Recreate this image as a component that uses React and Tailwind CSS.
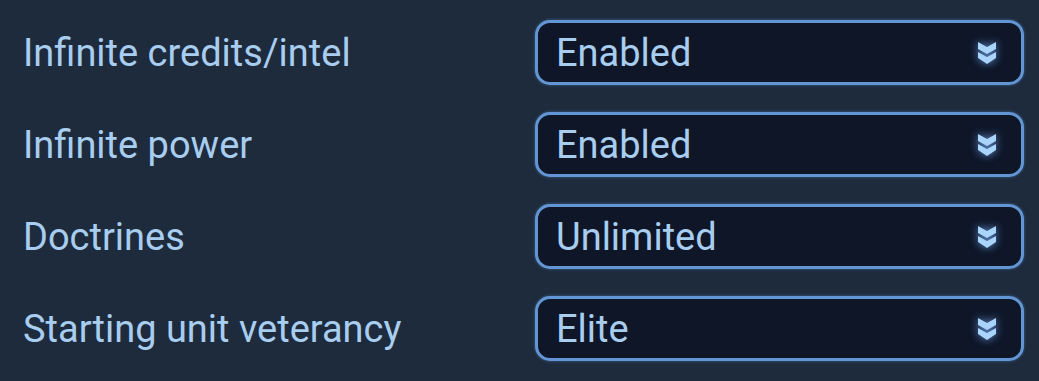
const rows = [
  { label: 'Infinite credits/intel', value: 'Enabled' },
  { label: 'Infinite power', value: 'Enabled' },
  { label: 'Doctrines', value: 'Unlimited' },
  { label: 'Starting unit veterancy', value: 'Elite' },
]

function Chevrons() {
  return (
    <svg
      className="w-[20px] h-[24px] drop-shadow-[0_0_4px_rgba(120,180,255,0.8)]"
      viewBox="0 0 20 24"
      fill="#a9d4fb"
    >
      <polygon points="1,1 10,6 19,1 19,8 10,13 1,8" />
      <polygon points="1,11 10,16 19,11 19,17 10,23 1,17" />
    </svg>
  )
}

export default function App() {
  return (
    <div
      className="w-[1039px] h-[381px] bg-[#1e2b3d] flex flex-col gap-[27px] py-[20px] pl-[23px] pr-[15px]"
      style={{ fontFamily: 'Roboto, "Noto Sans", sans-serif' }}
    >
      {rows.map((r) => (
        <div key={r.label} className="flex items-center h-[65px]">
          <div className="w-[512px] text-[38px] text-[#a8cdef] leading-none">{r.label}</div>
          <button className="flex-1 h-full flex items-center justify-between rounded-[15px] border-[3px] border-[#6195d4] bg-[#0e1628] pl-[18px] pr-[24px] text-[38px] text-[#a8cdef] leading-none shadow-[0_0_3px_rgba(100,160,230,0.5)]">
            <span>{r.value}</span>
            <Chevrons />
          </button>
        </div>
      ))}
    </div>
  )
}
